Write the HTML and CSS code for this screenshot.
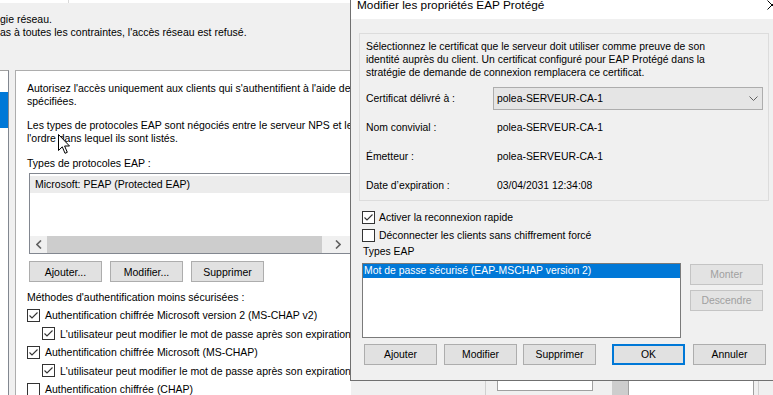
FILE: index.html
```html
<!DOCTYPE html>
<html lang="fr">
<head>
<meta charset="utf-8">
<title>Modifier les propriétés EAP Protégé</title>
<link rel="stylesheet" href="styles.css">
</head>
<body>
<div class="screen">
  <div class="topstrip"><div class="topstrip-cell"></div></div>
  <div class="intro">
    <p class="line">gie réseau.</p>
    <p class="line">as à toutes les contraintes, l'accès réseau est refusé.</p>
  </div>
  <div class="main">
    <div class="nav"><div class="nav-sel"></div></div>
    <div class="page">
      <p class="line">Autorisez l'accès uniquement aux clients qui s'authentifient à l'aide de</p>
      <p class="line">spécifiées.</p>
      <p class="line gap">Les types de protocoles EAP sont négociés entre le serveur NPS et le</p>
      <p class="line">l'ordre dans lequel ils sont listés.</p>
      <p class="line gap">Types de protocoles EAP :</p>
      <div class="eaplist">
        <div class="eaplist-item">Microsoft: PEAP (Protected EAP)</div>
        <div class="eaplist-fill"></div>
        <div class="hscroll">
          <div class="sb-arrow"><svg width="6" height="9" viewBox="0 0 6 9"><path d="M5 0.5 L1 4.5 L5 8.5" fill="none" stroke="#606060" stroke-width="1.6"/></svg></div>
          <div class="sb-thumb"></div>
          <div class="sb-track"></div>
          <div class="sb-arrow"><svg width="6" height="9" viewBox="0 0 6 9"><path d="M1 0.5 L5 4.5 L1 8.5" fill="none" stroke="#606060" stroke-width="1.6"/></svg></div>
        </div>
      </div>
      <div class="btnrow">
        <button class="btn">Ajouter...</button>
        <button class="btn">Modifier...</button>
        <button class="btn">Supprimer</button>
      </div>
      <p class="line methods">Méthodes d'authentification moins sécurisées :</p>
      <div class="chk"><span class="box"><svg width="11" height="11" viewBox="0 0 11 11"><path d="M1.5 5.5 L4 8 L9.5 2.5" fill="none" stroke="#333" stroke-width="1.1"/></svg></span>Authentification chiffrée Microsoft version 2 (MS-CHAP v2)</div>
      <div class="chk sub"><span class="box"><svg width="11" height="11" viewBox="0 0 11 11"><path d="M1.5 5.5 L4 8 L9.5 2.5" fill="none" stroke="#333" stroke-width="1.1"/></svg></span>L'utilisateur peut modifier le mot de passe après son expiration</div>
      <div class="chk"><span class="box"><svg width="11" height="11" viewBox="0 0 11 11"><path d="M1.5 5.5 L4 8 L9.5 2.5" fill="none" stroke="#333" stroke-width="1.1"/></svg></span>Authentification chiffrée Microsoft (MS-CHAP)</div>
      <div class="chk sub"><span class="box"><svg width="11" height="11" viewBox="0 0 11 11"><path d="M1.5 5.5 L4 8 L9.5 2.5" fill="none" stroke="#333" stroke-width="1.1"/></svg></span>L'utilisateur peut modifier le mot de passe après son expiration</div>
      <div class="chk"><span class="box"></span>Authentification chiffrée (CHAP)</div>
    </div>
    <div class="under">
      <div class="under-row">
        <div class="u-line u1"></div>
        <div class="u-box"></div>
        <div class="u-bar"></div>
        <div class="u-white"></div>
        <div class="u-line u2"></div>
      </div>
    </div>
  </div>

  <div class="cursor"><svg width="13" height="21" viewBox="0 0 13 21"><path d="M0.5 0.5 L0.5 16.5 L4.3 12.8 L7 19.3 L9.3 18.3 L6.6 12 L11.5 12 Z" fill="#fff" stroke="#000" stroke-width="1" stroke-linejoin="miter"/></svg></div>

  <div class="dialog">
    <div class="titlebar">
      <span class="title">Modifier les propriétés EAP Protégé</span>
      <span class="close"><svg width="10" height="10" viewBox="0 0 10 10"><path d="M0.5 0.5 L9.5 9.5 M9.5 0.5 L0.5 9.5" stroke="#000" stroke-width="1"/></svg></span>
    </div>
    <div class="dbody">
      <div class="group">
        <p class="dline">Sélectionnez le certificat que le serveur doit utiliser comme preuve de son</p>
        <p class="dline">identité auprès du client. Un certificat configuré pour EAP Protégé dans la</p>
        <p class="dline">stratégie de demande de connexion remplacera ce certificat.</p>
        <div class="grid">
          <span class="lbl">Certificat délivré à :</span>
          <div class="combo"><span>polea-SERVEUR-CA-1</span><svg width="9" height="5" viewBox="0 0 9 5"><path d="M0.5 0.5 L4.5 4.5 L8.5 0.5" fill="none" stroke="#606060" stroke-width="1"/></svg></div>
          <span class="lbl">Nom convivial :</span>
          <span class="val">polea-SERVEUR-CA-1</span>
          <span class="lbl">Émetteur :</span>
          <span class="val">polea-SERVEUR-CA-1</span>
          <span class="lbl">Date d’expiration :</span>
          <span class="val">03/04/2031 12:34:08</span>
        </div>
      </div>
      <div class="dchecks">
        <div class="dchk"><span class="box"><svg width="11" height="11" viewBox="0 0 11 11"><path d="M1.5 5.5 L4 8 L9.5 2.5" fill="none" stroke="#333" stroke-width="1.1"/></svg></span>Activer la reconnexion rapide</div>
        <div class="dchk"><span class="box"></span>Déconnecter les clients sans chiffrement forcé</div>
      </div>
      <p class="dline types">Types EAP</p>
      <div class="typesrow">
        <div class="typelist"><div class="typelist-sel">Mot de passe sécurisé (EAP-MSCHAP version 2)</div></div>
        <div class="sidebtns">
          <button class="dbtn disabled">Monter</button>
          <button class="dbtn disabled second">Descendre</button>
        </div>
      </div>
      <div class="dbtnrow">
        <button class="dbtn b-add">Ajouter</button>
        <button class="dbtn b-mod">Modifier</button>
        <button class="dbtn b-del">Supprimer</button>
        <button class="dbtn b-ok">OK</button>
        <button class="dbtn b-cancel">Annuler</button>
      </div>
    </div>
  </div>
</div>
</body>
</html>
```
FILE: styles.css
```css
* { box-sizing: border-box; margin: 0; padding: 0; }
html, body { width: 773px; height: 395px; overflow: hidden; }
body {
  background: #f0f0f0;
  font-family: "Liberation Sans", Arial, sans-serif;
  color: #000;
}
.screen { position: relative; width: 773px; height: 395px; overflow: hidden; }

.topstrip { height: 3px; background: #fff; display: flex; }
.topstrip-cell { width: 69px; border-right: 1px solid #d9d9d9; }

.intro { height: 67px; padding-top: 10px; padding-left: 0; }
.line { font-size: 10.5px; line-height: 13px; white-space: nowrap; }

.main { display: flex; height: 325px; }
.nav {
  width: 9px; background: #fff;
  border-top: 1px solid #a0a0a0; border-right: 1px solid #828790;
}
.nav-sel { margin-top: 21px; height: 36px; background: #0078d7; }

.page {
  width: 336px; margin-left: 6px;
  background: #fff;
  border-top: 1px solid #adadad; border-left: 1px solid #adadad;
  padding: 11px 0 0 11px;
  overflow: hidden;
}
.page .gap { margin-top: 11px; }
.page p.line:nth-of-type(5) { margin-top: 12px; }

.eaplist {
  margin: 3px 0 0 2px; width: 333px; height: 81px;
  border: 1px solid #828790; background: #fff;
  display: flex; flex-direction: column;
}
.eaplist-item {
  margin-top: 2px; height: 17px; line-height: 17px;
  background: #ececec; padding-left: 5px;
  font-size: 10.5px; white-space: nowrap;
}
.eaplist-fill { flex: 1; }
.hscroll { display: flex; height: 17px; background: #f0f0f0; }
.sb-arrow { width: 17px; display: flex; align-items: center; justify-content: center; }
.sb-thumb { width: 275px; background: #cdcdcd; }
.sb-track { width: 7px; }

.btnrow { display: flex; gap: 8px; margin: 7px 0 0 2px; }
.btn {
  width: 73px; height: 21px;
  background: #e1e1e1; border: 1px solid #adadad;
  font-family: inherit; font-size: 10.5px; color: #000;
}
.methods { margin-top: 9px; }

.chk {
  display: flex; align-items: center; height: 18.5px;
  font-size: 10.5px; white-space: nowrap;
}
.chk .box, .dchk .box {
  width: 13px; height: 13px; flex: none;
  border: 1px solid #333; background: #fff;
  display: flex; align-items: center; justify-content: center;
}
.chk .box { margin-right: 5px; }
.chk.sub { padding-left: 15px; }
.page .methods + .chk { margin-top: 2px; }

.under { flex: 1; display: flex; flex-direction: column; justify-content: flex-end; }
.under-row { height: 15px; display: flex; }
.u-line { width: 1px; background: #d0d0d0; }
.u1 { margin-left: 134px; }
.u-box {
  margin-left: 11px; width: 96px; height: 11px;
  background: #fff; border: 1px solid #a0a0a0; border-top: 0;
}
.u-bar { margin-left: 19px; width: 16px; background: #cdcdcd; }
.u-white {
  width: 126px; background: #fff;
  border-left: 1px solid #a0a0a0; border-right: 1px solid #a0a0a0;
}
.u2 { margin-left: 4px; }

.cursor { position: absolute; left: 58px; top: 134px; width: 13px; height: 21px; }
.cursor svg { display: block; }

/* Dialog */
.dialog {
  position: absolute; left: 350px; top: -10px;
  width: 446px; height: 391px;
  background: #f0f0f0; border: 1px solid #707070;
  font-size: 10.4px;
}
.titlebar {
  height: 28px; background: #fff;
  display: flex; align-items: center; justify-content: space-between;
  padding-left: 6px;
}
.title { font-size: 11.8px; white-space: nowrap; }
.close { width: 46px; height: 28px; display: flex; align-items: center; justify-content: center; }

.dbody { padding: 14px 0 0 8px; }
.group {
  width: 410px; height: 168px;
  border: 1px solid #dcdcdc;
  padding: 6px 5px 0 6px;
}
.dline { font-size: 10.4px; line-height: 13px; white-space: nowrap; }
.grid {
  margin-top: 5px;
  display: grid; grid-template-columns: 127px 270px;
  grid-auto-rows: 29px; align-items: center;
}
.lbl, .val { white-space: nowrap; }
.val { padding-left: 4px; }
.combo {
  height: 23px; border: 1px solid #adadad; background: #e5e5e5;
  display: flex; align-items: center; justify-content: space-between;
  padding: 0 4px 0 3px;
}

.dchecks { margin-top: 7px; }
.dchk { display: flex; align-items: center; height: 18px; padding-left: 3px; white-space: nowrap; }
.dchk .box { margin-right: 4px; }
.types { margin: 1px 0 0 4px; }

.typesrow { display: flex; margin: 5px 0 0 3px; }
.typelist {
  width: 319px; height: 75px;
  border: 1px solid #7a7a7a; background: #fff;
}
.typelist-sel {
  height: 14px; line-height: 14px; padding-left: 1px;
  background: #0078d7; color: #fff; white-space: nowrap;
}
.sidebtns { margin-left: 9px; display: flex; flex-direction: column; }
.dbtn {
  width: 73px; height: 21px;
  background: #e1e1e1; border: 1px solid #adadad;
  font-family: inherit; font-size: 10.4px; color: #000;
}
.sidebtns .dbtn { margin-top: 1px; }
.sidebtns .second { margin-top: 5px; }
.dbtn.disabled { background: #e3e3e3; border-color: #c4c4c4; color: #a0a0a0; }

.dbtnrow { display: flex; margin-top: 6px; }
.b-add { margin-left: 5px; }
.b-mod { margin-left: 7px; }
.b-del { margin-left: 6px; }
.b-ok { margin-left: 16px; border: 2px solid #0078d7; }
.b-cancel { margin-left: 8px; }
```
